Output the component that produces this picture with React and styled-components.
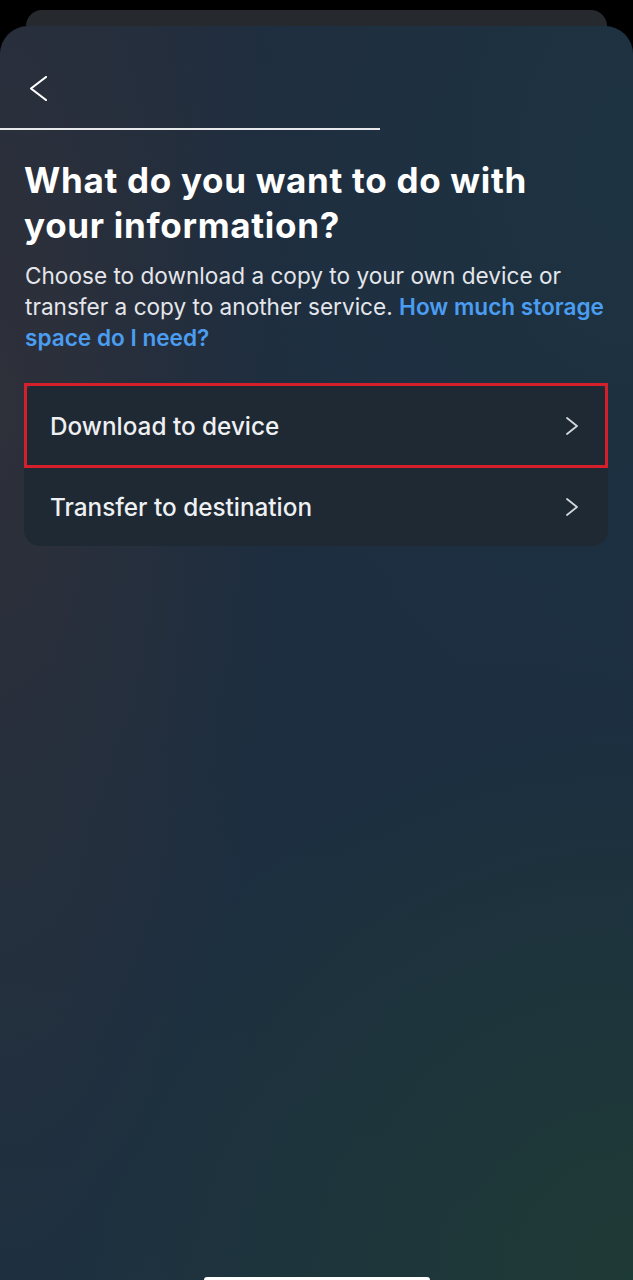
import React from "react";
import styled, { createGlobalStyle } from "styled-components";

const GlobalStyle = createGlobalStyle`
  html, body {
    margin: 0;
    padding: 0;
    background: #000;
  }
  body {
    font-family: Inter, "Noto Sans", "Liberation Sans", sans-serif;
    -webkit-font-smoothing: antialiased;
  }
`;

function Chevron({ w = 12, h = 18, stroke = 2, color = "#fff", left }) {
  const pts = left ? `${w - 1},1 1,${h / 2} ${w - 1},${h - 1}` : `1,1 ${w - 1},${h / 2} 1,${h - 1}`;
  return (
    <svg width={w} height={h} viewBox={`0 0 ${w} ${h}`} fill="none">
      <polyline
        points={pts}
        stroke={color}
        strokeWidth={stroke}
        strokeLinecap="round"
        strokeLinejoin="round"
      />
    </svg>
  );
}

const options = ["Download to device", "Transfer to destination"];

function App() {
  return (
    <>
      <GlobalStyle />
      <Screen>
        <Sheet>
          <TopBar>
            <BackButton>
              <Chevron w={17} h={25} stroke={2.2} left />
            </BackButton>
          </TopBar>
          <Progress />
          <Content>
            <Heading>What do you want to do with your information?</Heading>
            <Body>
              Choose to download a copy to your own device or transfer a copy
              to another service. <HelpLink>How much storage space do I need?</HelpLink>
            </Body>
            <Card>
              {options.map((label, i) => (
                <Row key={label} $active={i === 0}>
                  <RowLabel>{label}</RowLabel>
                  <Chevron w={12} h={18} stroke={1.8} color="#d4d8dd" />
                </Row>
              ))}
            </Card>
          </Content>
          <HomeBar />
        </Sheet>
      </Screen>
    </>
  );
}

const Screen = styled.div`
  position: relative;
  width: 633px;
  height: 1280px;
  overflow: hidden;
  padding-top: 26px;
  box-sizing: border-box;
  background: #000;

  &::before {
    content: "";
    position: absolute;
    top: 10px;
    left: 26px;
    right: 26px;
    height: 40px;
    border-radius: 16px 16px 0 0;
    background: #26292e;
  }
`;

const Sheet = styled.div`
  position: relative;
  height: 1254px;
  border-radius: 28px 28px 0 0;
  overflow: hidden;
  background:
    radial-gradient(ellipse 90% 45% at 100% 100%, rgba(31, 60, 52, 0.85) 0%, rgba(31, 60, 52, 0) 100%),
    radial-gradient(ellipse 70% 50% at 100% 10%, rgba(29, 52, 66, 0.8) 0%, rgba(29, 52, 66, 0) 100%),
    radial-gradient(ellipse 45% 75% at 0% 30%, rgba(47, 48, 57, 0.95) 0%, rgba(47, 48, 57, 0) 100%),
    linear-gradient(180deg, #1f2d3f 0%, #1c2e40 60%, #1d3040 100%);
`;

const TopBar = styled.div`
  height: 102px;
  box-sizing: border-box;
  display: flex;
  align-items: flex-start;
  padding: 50px 0 0 30px;
`;

const BackButton = styled.div`
  width: 17px;
  height: 25px;
  display: flex;
`;

const Progress = styled.div`
  width: 380px;
  height: 2px;
  background: #e6e8ea;
`;

const Content = styled.div`
  padding: 28px 25px 0 24px;
`;

const Heading = styled.h1`
  margin: 0;
  color: #fff;
  font-size: 35px;
  line-height: 45px;
  font-weight: 700;
  letter-spacing: 0.7px;
  max-width: 560px;
`;

const Body = styled.p`
  margin: 12px 0 0 1px;
  color: #e4e6eb;
  font-size: 22.6px;
  line-height: 31px;
  font-weight: 400;
`;

const HelpLink = styled.span`
  color: #4a9df0;
  font-weight: 600;
`;

const Card = styled.div`
  margin-top: 30px;
  border-radius: 16px;
  background: #1f2934;
`;

const Row = styled.div`
  height: ${(p) => (p.$active ? "79px" : "78px")};
  display: flex;
  align-items: center;
  justify-content: space-between;
  padding: ${(p) => (p.$active ? "0 27px 0 23px" : "0 30px 0 26px")};
  border: ${(p) => (p.$active ? "3px solid #d5202c" : "none")};
`;

const RowLabel = styled.span`
  color: #eef0f2;
  font-size: 24.3px;
  font-weight: 500;
`;

const HomeBar = styled.div`
  position: absolute;
  left: 204px;
  bottom: -3px;
  width: 226px;
  height: 6px;
  border-radius: 3px;
  background: #fff;
`;

export default App;
